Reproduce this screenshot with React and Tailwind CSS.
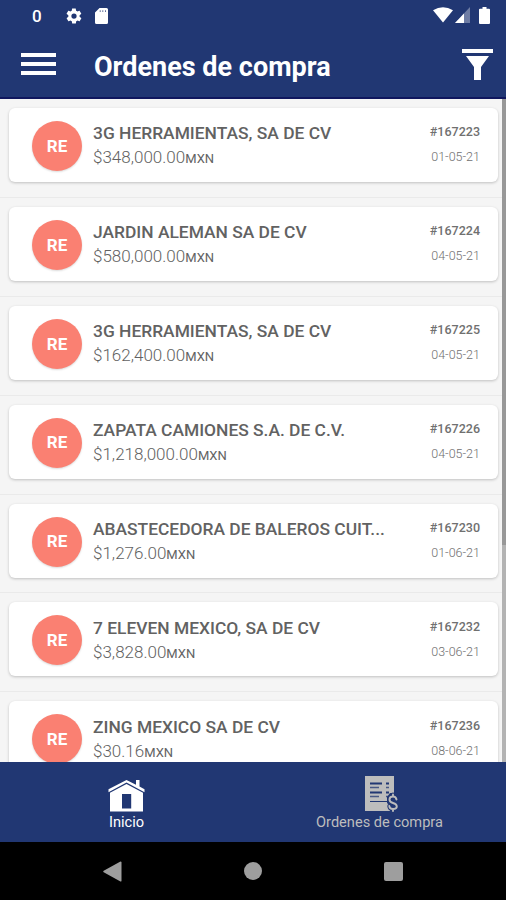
const orders = [
  { id: '167223', name: '3G HERRAMIENTAS, SA DE CV', total: '348,000.00', date: '01-05-21' },
  { id: '167224', name: 'JARDIN ALEMAN SA DE CV', total: '580,000.00', date: '04-05-21' },
  { id: '167225', name: '3G HERRAMIENTAS, SA DE CV', total: '162,400.00', date: '04-05-21' },
  { id: '167226', name: 'ZAPATA CAMIONES S.A. DE C.V.', total: '1,218,000.00', date: '04-05-21' },
  { id: '167230', name: 'ABASTECEDORA DE BALEROS CUIT...', total: '1,276.00', date: '01-06-21' },
  { id: '167232', name: '7 ELEVEN MEXICO, SA DE CV', total: '3,828.00', date: '03-06-21' },
  { id: '167236', name: 'ZING MEXICO SA DE CV', total: '30.16', date: '08-06-21' },
];

function StatusBar() {
  return (
    <div className="flex h-8 items-center pl-8 pr-4 text-white">
      <span className="w-[33px] text-[17px] font-medium leading-none">0</span>
      <svg width="18" height="18" viewBox="0 0 24 24" fill="currentColor">
        <path d="M19.4 13c0-.3.1-.6.1-1s0-.7-.1-1l2.1-1.6c.2-.2.2-.4.1-.6l-2-3.5c-.1-.2-.4-.3-.6-.2l-2.5 1c-.5-.4-1.1-.7-1.7-1l-.4-2.6c0-.3-.2-.5-.5-.5h-4c-.3 0-.5.2-.5.4L9 5.1c-.6.2-1.2.6-1.7 1l-2.5-1c-.2-.1-.5 0-.6.2l-2 3.5c-.1.2-.1.5.1.6L4.5 11c0 .3-.1.7-.1 1s0 .7.1 1l-2.1 1.6c-.2.2-.2.4-.1.6l2 3.5c.1.2.4.3.6.2l2.5-1c.5.4 1.1.7 1.7 1l.4 2.6c0 .3.2.5.5.5h4c.3 0 .5-.2.5-.4l.4-2.7c.6-.2 1.2-.6 1.7-1l2.5 1c.2.1.5 0 .6-.2l2-3.5c.1-.2.1-.5-.1-.6L19.4 13zM12 15.5a3.5 3.5 0 1 1 0-7 3.5 3.5 0 0 1 0 7z" />
      </svg>
      <svg className="ml-[12px]" width="13" height="16" viewBox="0 0 13 16" fill="currentColor">
        <path fillRule="evenodd" d="M4.5 0H11.5Q13 0 13 1.5V14.5Q13 16 11.5 16H1.5Q0 16 0 14.5V4.5zM4.8 2.2V4H5.5V2.2zM7.5 2.2V4H8.2V2.2zM10.2 2.2V4H10.9V2.2z" />
      </svg>
      <svg className="mb-[2px] ml-auto" width="20" height="16" viewBox="0 0 20 16" fill="currentColor">
        <path d="M0 3.3Q10-2.7 20 3.3L10 15.5z" />
      </svg>
      <svg className="mb-[2px] ml-[2px]" width="15" height="16" viewBox="0 0 15 16" fill="currentColor">
        <path d="M15 0V16H0z" opacity=".35" />
        <path d="M9 6.4V16H0z" />
      </svg>
      <svg className="mb-[2px] ml-[9px]" width="11" height="17" viewBox="0 0 11 17" fill="currentColor">
        <path d="M3.5 0h4v1.7H10q1 0 1 1V16q0 1-1 1H1q-1 0-1-1V2.7q0-1 1-1h2.5z" />
      </svg>
    </div>
  );
}

function Header() {
  return (
    <div className="flex h-[65px] items-start pl-[21px] pr-[13px] text-white">
      <div className="mt-[21px] flex w-[35px] flex-col gap-[5px]">
        <div className="h-1 bg-white" />
        <div className="h-1 bg-white" />
        <div className="h-1 bg-white" />
      </div>
      <h1 className="ml-[38px] mt-[19px] text-[27px] font-bold leading-8">Ordenes de compra</h1>
      <svg className="ml-auto mt-[17px]" width="31" height="31" viewBox="0 0 31 31" fill="currentColor">
        <path d="M0 0H31V4H0zM4 7H27L19 18V31H12V18z" />
      </svg>
    </div>
  );
}

function OrderCard({ order }) {
  return (
    <div className="h-[98.9px] shrink-0 border-b border-[#eaeaea] pl-[9px] pr-1 pt-[9px]">
      <div className="flex h-[74px] rounded-[6px] bg-white pl-[23px] pr-[18px] shadow-[0_1px_3px_rgba(0,0,0,0.22)]">
        <div className="mt-[13px] flex size-[50px] shrink-0 items-center justify-center rounded-full bg-[#fa8072] pt-px text-[17px] font-bold text-white shadow-[0_1px_2px_rgba(0,0,0,0.15)]">
          RE
        </div>
        <div className="ml-[11px] min-w-0 pt-[14.4px] text-[#626262]">
          <p className="whitespace-nowrap text-[17.4px] font-medium leading-[22px]">{order.name}</p>
          <p className="mt-[2px] whitespace-nowrap text-[17px] font-light leading-[23px]">
            ${order.total}
            <span className="text-[13px] font-normal">MXN</span>
          </p>
        </div>
        <div className="ml-auto pt-[14.4px] text-right text-[12.5px] text-[#707070]">
          <p className="font-medium leading-5">#{order.id}</p>
          <p className="mt-[5px] font-light leading-5">{order.date}</p>
        </div>
      </div>
    </div>
  );
}

function TabBar() {
  return (
    <div className="grid h-20 grid-cols-2 bg-[#213773] text-[14.6px] leading-[18px]">
      <div className="flex flex-col items-center pt-[17px] text-white">
        <svg width="37" height="33" viewBox="0 0 37 33" fill="currentColor">
          <path d="M18.5 1L28 5.8V1H31.5V7.6L36.5 10.3V13.2L18.5 3.5L.5 13.2V10.3z" />
          <path fillRule="evenodd" d="M18.5 4.9L35 13.8V32.5H2V13.8zM14 15V29.5H23.2V15z" />
        </svg>
        <span className="mt-px">Inicio</span>
      </div>
      <div className="flex flex-col items-center pt-[13px] text-[#bdbdbd]">
        <svg className="ml-[4px]" width="34" height="37" viewBox="0 0 34 37">
          <path d="M0 1H29V18H25L22 22V28L25 31V36H0z" fill="#bdbdbd" />
          <g stroke="#213773" fill="none">
            <path d="M5 8.5H17M21 8.5H24M5 17.5H17M21 17.5H24" strokeWidth="2" />
            <path d="M5 12.5H14M21 12.5H24M5 21.5H14M21 21.5H23" strokeWidth="1.3" opacity=".75" />
            <path d="M5 26.5H22" strokeWidth="1" />
          </g>
          {/* dollar sign over the sheet's lower corner */}
          <g fill="none" strokeLinecap="round">
            <path d="M31.5 24.5Q31 21.5 28 21.5Q24.5 21.5 24.5 24.5Q24.5 27 28 28Q31.8 29 31.8 31.5Q31.8 34 28 34Q24.5 34 24.3 31M28 19.5V21.5M28 34V36" stroke="#213773" strokeWidth="4" />
            <path d="M31.5 24.5Q31 21.5 28 21.5Q24.5 21.5 24.5 24.5Q24.5 27 28 28Q31.8 29 31.8 31.5Q31.8 34 28 34Q24.5 34 24.3 31M28 19.5V21.5M28 34V36" stroke="#bdbdbd" strokeWidth="1.9" />
          </g>
        </svg>
        <span className="mt-px">Ordenes de compra</span>
      </div>
    </div>
  );
}

function SystemNav() {
  return (
    <div className="flex h-[58px] items-center justify-between bg-black pl-[103px] pr-[103px] text-[#9e9e9e]">
      <svg width="19" height="21" viewBox="0 0 19 21" fill="currentColor">
        <path d="M18.5 1V20Q18 21 17 20.3L.7 11.3Q-.3 10.5.7 9.7L17 .7Q18 0 18.5 1z" />
      </svg>
      <div className="size-[18px] rounded-full bg-[#9e9e9e]" />
      <div className="size-[19px] rounded-[2px] bg-[#9e9e9e]" />
    </div>
  );
}

export default function App() {
  return (
    <div className="flex h-[900px] w-[506px] flex-col overflow-hidden bg-black font-[Roboto,sans-serif]">
      <header className="h-[99px] shrink-0 border-b-2 border-[#10175e] bg-[#213773]">
        <StatusBar />
        <Header />
      </header>
      <main className="flex h-[663px] shrink-0 overflow-hidden bg-[#f5f5f5]">
        <div className="flex flex-1 flex-col">
          {orders.map(order => (
            <OrderCard key={order.id} order={order} />
          ))}
        </div>
        <div className="w-1 bg-[#b3b3b3]">
          <div className="h-[446px] bg-[#989898]" />
        </div>
      </main>
      <TabBar />
      <SystemNav />
    </div>
  );
}
